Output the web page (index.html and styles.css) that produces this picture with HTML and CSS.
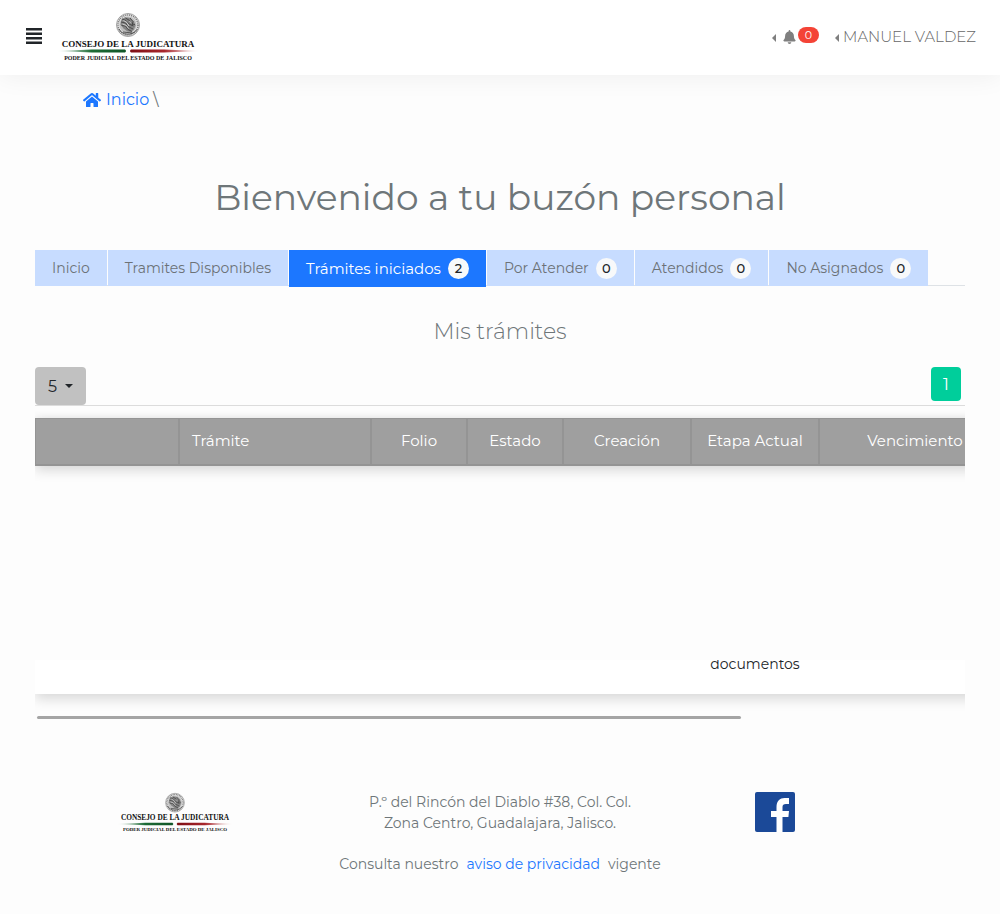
FILE: index.html
```html
<!DOCTYPE html>
<html lang="es">
<head>
<meta charset="utf-8">
<meta name="viewport" content="width=device-width, initial-scale=1">
<title>Buzón personal</title>
<link rel="stylesheet" href="styles.css">
</head>
<body>
<svg class="defs" aria-hidden="true">
  <defs>
    <linearGradient id="green" x1="0" x2="1"><stop offset="0" stop-color="#1d6b35" stop-opacity="0"/><stop offset=".5" stop-color="#1d6b35"/><stop offset="1" stop-color="#0f5527"/></linearGradient>
    <linearGradient id="red" x1="0" x2="1"><stop offset="0" stop-color="#7d0d12"/><stop offset=".5" stop-color="#a8272c"/><stop offset="1" stop-color="#a8272c" stop-opacity="0"/></linearGradient>
    <symbol id="logo" viewBox="0 0 284 100">
      <circle cx="142" cy="26" r="23" fill="#e2e2e2" stroke="#888" stroke-width="1.5"/>
      <circle cx="142" cy="26" r="20" fill="none" stroke="#777" stroke-width="3" stroke-dasharray="2 2"/>
      <circle cx="142" cy="26" r="17" fill="#bdbdbd"/>
      <path d="M129 15c6-5 13-5 19-1l6 5 3 8-3 8-6 5-7-1-8-6-6-8z" fill="#858585"/>
      <path d="M130 14l8 3 6 7 9 4M128 20l9 2 5 7 10 5M129 27l8 1 5 7 8 4M137 12l8 5 5 7 6 1M146 12l6 7-2 8" fill="none" stroke="#444" stroke-width="1.8"/>
      <path d="M133 17l7 4 4 7M131 24l8 3 4 6M145 18l4 5" fill="none" stroke="#eee" stroke-width="1.4"/>
      <path d="M124 34c5 12 26 15 36 1M132 40l19 2" fill="none" stroke="#555" stroke-width="2"/>
      <text class="logo-title" x="142" y="69" text-anchor="middle">CONSEJO DE LA JUDICATURA</text>
      <path d="M0 78L70 75h66q4 3 0 6H70z" fill="url(#green)"/>
      <path d="M284 78L214 75h-66q-4 3 0 6h66z" fill="url(#red)"/>
      <text class="logo-sub" x="142" y="96" text-anchor="middle">PODER JUDICIAL DEL ESTADO DE JALISCO</text>
    </symbol>
  </defs>
</svg>

<header class="topbar">
  <button class="menu-button" type="button" aria-label="Menú">
    <svg viewBox="0 0 16 16"><path d="M0 0h16v2.400H0zM0 4.500h16v2.400H0zM0 9h16v2.400H0zM0 13.500h16v2.400H0z"/></svg>
  </button>
  <a class="brand" href="#" aria-label="Consejo de la Judicatura"><svg class="brand-logo"><use href="#logo"/></svg></a>
  <nav class="user-nav">
    <a class="user-link" href="#" aria-label="Notificaciones">
      <svg class="caret-left" viewBox="0 0 4 8"><path d="M4 0v8L0 4z"/></svg>
      <svg class="bell" viewBox="0 0 448 512"><path d="M224 512c35.320 0 63.970-28.650 63.970-64H160.030c0 35.350 28.650 64 63.970 64zm215.390-149.710c-19.320-20.760-55.470-51.990-55.470-154.290 0-77.700-54.480-139.900-127.940-155.160V32c0-17.670-14.320-32-31.980-32s-31.980 14.330-31.980 32v20.840C118.560 68.100 64.080 130.300 64.080 208c0 102.300-36.150 133.530-55.470 154.290-6 6.450-8.660 14.160-8.610 21.710.110 16.400 12.980 32 32.100 32h383.800c19.120 0 32-15.600 32.100-32 .050-7.550-2.610-15.270-8.610-21.710z"/></svg>
      <span class="alert-count">0</span>
    </a>
    <a class="user-link" href="#">
      <svg class="caret-left" viewBox="0 0 4 8"><path d="M4 0v8L0 4z"/></svg>
      <span>MANUEL VALDEZ</span>
    </a>
  </nav>
</header>

<nav class="breadcrumb" aria-label="Ruta">
  <a href="#"><svg class="home" viewBox="0 0 576 512"><path d="M280.370 148.260L96 300.110V464a16 16 0 0 0 16 16l112.060-.290a16 16 0 0 0 15.920-16V368a16 16 0 0 1 16-16h64a16 16 0 0 1 16 16v95.640a16 16 0 0 0 16 16.050L464 480a16 16 0 0 0 16-16V300L295.670 148.260a12.190 12.190 0 0 0-15.300 0zM571.600 251.470L488 182.560V44.050a12 12 0 0 0-12-12h-56a12 12 0 0 0-12 12v72.610L318.470 43a48 48 0 0 0-61 0L4.340 251.470a12 12 0 0 0-1.600 16.900l25.500 31A12 12 0 0 0 45.150 301l235.220-193.740a12.190 12.190 0 0 1 15.300 0L530.900 301a12 12 0 0 0 16.900-1.600l25.500-31a12 12 0 0 0-1.700-16.930z"/></svg> Inicio</a>
  <span>\</span>
</nav>

<main class="content">
  <h1>Bienvenido a tu buzón personal</h1>
  <nav class="tabs">
    <a class="tab" href="#">Inicio</a>
    <a class="tab" href="#">Tramites Disponibles</a>
    <a class="tab active" href="#">Trámites iniciados <span class="count">2</span></a>
    <a class="tab" href="#">Por Atender <span class="count">0</span></a>
    <a class="tab" href="#">Atendidos <span class="count">0</span></a>
    <a class="tab" href="#">No Asignados <span class="count">0</span></a>
  </nav>
  <h2>Mis trámites</h2>
  <div class="table-tools">
    <div class="page-size">
      <select aria-label="Registros por página"><option>5</option></select>
      <svg viewBox="0 0 8 4" aria-hidden="true"><path d="M0 0h8L4 4z"/></svg>
    </div>
    <button class="page-button" type="button">1</button>
  </div>
  <div class="table-scroll">
    <table>
      <colgroup>
        <col class="w-actions"><col class="w-wide"><col class="w-small"><col class="w-small"><col class="w-medium"><col class="w-medium"><col class="w-wide"><col class="w-rest">
      </colgroup>
      <thead>
        <tr><th></th><th class="left">Trámite</th><th>Folio</th><th>Estado</th><th>Creación</th><th>Etapa Actual</th><th>Vencimiento</th><th></th></tr>
      </thead>
      <tbody>
        <tr class="pending"><td colspan="8"></td></tr>
        <tr class="record"><td colspan="5"></td><td><div class="stage">documentos</div></td><td colspan="2"></td></tr>
      </tbody>
    </table>
  </div>
  <div class="scroll-track"><div class="scroll-thumb"></div></div>
</main>

<footer class="footer">
  <div class="footer-grid">
    <svg class="footer-logo" role="img" aria-label="Consejo de la Judicatura"><use href="#logo"/></svg>
    <address>P.º del Rincón del Diablo #38, Col. Col.<br>Zona Centro, Guadalajara, Jalisco.</address>
    <a class="facebook" href="#" aria-label="Facebook">
      <svg viewBox="0 0 40 40"><rect width="40" height="40" rx="2" fill="#1b4998"/><path d="M21.500 40V25H16v-6h5.500v-4c0-6 3.500-9 8-9H34v6h-3c-2.500 0-3.500 1-3.500 3v4H34l-.600 6h-5.900v15z" fill="#fff"/></svg>
    </a>
  </div>
  <p class="privacy">Consulta nuestro <a href="#">aviso de privacidad</a> vigente</p>
</footer>
</body>
</html>
```
FILE: styles.css
```css
* { box-sizing: border-box; }
body {
  margin: 0;
  background: #fdfdfd;
  color: #6e7679;
  font: 400 14px/21px Montserrat, Inter, sans-serif;
}
a { color: #1c77ff; text-decoration: none; }
button, select { font: inherit; border: 0; cursor: pointer; }
svg { display: block; }
.defs { position: absolute; width: 0; height: 0; }
.logo-title { font: bold 18px "Liberation Serif", serif; fill: #111; }
.logo-sub { font: bold 12px "Liberation Serif", serif; fill: #111; }

.topbar {
  display: flex;
  align-items: center;
  height: 75px;
  padding: 0 24px 2px 26px;
  background: #fff;
  box-shadow: 0 2px 24px rgba(0, 0, 0, .06);
}
.menu-button { padding: 0; background: none; color: #212529; }
.menu-button svg { width: 16px; height: 16px; margin-bottom: 2px; fill: #212529; }
.brand { margin-left: 15px; }
.brand-logo { width: 142px; height: 50px; }
.user-nav { display: flex; align-items: center; gap: 16px; margin-left: auto; }
.user-link { display: flex; align-items: center; gap: 4px; color: #666; font-size: 15px; font-weight: 300; }
.caret-left { width: 4px; height: 8px; margin-top: 2px; fill: #7f7f7f; }
.bell { width: 13px; height: 14px; margin-left: 3px; fill: #7f7f7f; }
.alert-count {
  margin: 0 0 4px -2px;
  padding: 0 7px;
  border-radius: 10px;
  background: #f44336;
  color: #fff;
  font-size: 11px;
  font-weight: 400;
  line-height: 16px;
}

.breadcrumb { display: flex; gap: 4px; padding: 13px 83px 12px; font-size: 16px; line-height: 24px; }
.breadcrumb a { display: flex; align-items: center; gap: 5px; }
.home { width: 18px; height: 16px; fill: #1c77ff; }

.content { padding: 0 35px; }
h1 { margin: 50px 0 29px; font-size: 36px; font-weight: 400; line-height: 47px; text-align: center; }
.tabs { display: flex; gap: 1px; height: 36px; border-bottom: 1px solid #dee2e6; }
.tab {
  display: flex;
  align-items: center;
  gap: 7px;
  height: 36px;
  padding: 0 17px;
  background: #c7dcff;
  color: #6c7277;
  white-space: nowrap;
}
.tab.active { height: 37px; background: #1c77ff; color: #fff; font-size: 15px; }
.count {
  width: 21px;
  border-radius: 50%;
  background: #f8f9fa;
  color: #212529;
  font-size: 13px;
  font-weight: 500;
  text-align: center;
}
h2 { margin: 32px 0 22px; font-size: 22px; font-weight: 300; line-height: 27px; text-align: center; }

.table-tools {
  display: flex;
  justify-content: space-between;
  align-items: flex-start;
  padding-right: 4px;
  border-bottom: 1px solid #dcdcdc;
}
.page-size { position: relative; }
.page-size select {
  width: 51px;
  height: 38px;
  padding: 0 13px;
  border-radius: 4px;
  background: #c1c1c1;
  color: #212529;
  font-size: 16px;
  appearance: none;
}
.page-size svg { position: absolute; top: 17px; right: 13px; width: 8px; height: 4px; fill: #212529; pointer-events: none; }
.page-button {
  width: 30px;
  height: 34px;
  padding: 0;
  border-radius: 4px;
  background: #00ce9b;
  color: #fff;
  font-size: 16px;
}

.table-scroll { padding: 12px 0 20px; overflow-x: auto; scrollbar-width: none; }
table {
  width: 1232px;
  table-layout: fixed;
  border-spacing: 0;
  box-shadow: 0 5px 12px rgba(0, 0, 0, .15);
  clip-path: inset(-12px 0 -20px 0);
}
.w-actions { width: 144px; }
.w-small { width: 96px; }
.w-medium { width: 128px; }
.w-wide { width: 192px; }
.w-rest { width: 256px; }
thead { box-shadow: 0 4px 12px rgba(0, 0, 0, .16); }
th {
  height: 48px;
  padding: 0 0 2px;
  border: solid #949494;
  border-width: 1px 1px 2px;
  background: #9f9f9f;
  color: #fff;
  font-size: 15px;
  font-weight: 400;
}
th.left { padding-left: 12px; text-align: left; }
td { padding: 0; }
.pending td { height: 194px; }
.record td { height: 34px; background: #fff; vertical-align: top; }
.stage { height: 14px; overflow: hidden; color: #212529; line-height: 8px; text-align: center; }
.scroll-track { margin: 2px; }
.scroll-thumb { width: 76%; height: 3px; border-radius: 2px; background: #a5a5a5; }

.footer { margin-top: 73px; padding-bottom: 36px; }
.footer-grid { display: grid; grid-template-columns: 7fr 6fr 5fr; margin-right: 10%; justify-items: center; }
.footer-logo { width: 116px; height: 41px; }
address { font-style: normal; text-align: center; white-space: nowrap; }
.facebook svg { width: 40px; height: 40px; }
.privacy { display: flex; justify-content: center; gap: 8px; margin: 20px 0 0; }
```
